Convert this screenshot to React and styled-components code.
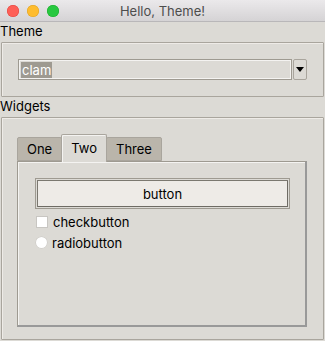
import React from "react";
import styled, { createGlobalStyle } from "styled-components";

const Global = createGlobalStyle`
  html, body { margin: 0; padding: 0; background: #dcdad5; }
  body { font-family: Inter, "Liberation Sans", Arial, sans-serif; font-size: 13px; color: #000; }
`;

const Window = styled.div`
  width: 325px;
  height: 341px;
  background: #dcdad5;
  display: flex;
  flex-direction: column;
  overflow: hidden;
`;

const TitleBar = styled.div`
  height: 21px;
  border-bottom: 1px solid #b9b7b9;
  background: linear-gradient(#ebe9eb, #d5d3d5);
  position: relative;
  display: flex;
  align-items: center;
  justify-content: center;
  color: #4d4d4d;
  font-size: 13px;
`;

const Lights = styled.div`
  position: absolute;
  left: 7px;
  top: 5px;
  display: flex;
  gap: 8px;
`;

const Light = styled.span`
  width: 12px;
  height: 12px;
  border-radius: 50%;
  background: ${(p) => p.$c};
  box-shadow: inset 0 0 0 0.5px ${(p) => p.$b};
`;

const Label = styled.div`
  height: 20px;
  line-height: 19px;
`;

const Frame = styled.div`
  margin: 0 1px;
  border: 1px solid #a9a59d;
  box-shadow: inset 1px 1px 0 #eeebe7;
  border-radius: 1px;
  ${(p) => p.$grow && "flex: 1; margin-bottom: 1px;"}
  padding: ${(p) => p.$pad};
  display: flex;
  flex-direction: column;
`;

const Combo = styled.div`
  display: flex;
  height: 21px;
`;

const Entry = styled.div`
  flex: 1;
  border: 1px solid #9e9a91;
  box-shadow: inset 1px 1px 0 #f4f3f1, inset -1px -1px 0 #f4f3f1;
  display: flex;
  align-items: center;
  padding-left: 2px;
`;

const Selected = styled.span`
  background: #9e9a91;
  color: #fff;
  padding: 0 1px;
  line-height: 16px;
`;

const Arrow = styled.div`
  width: 12px;
  margin-left: 1px;
  border: 1px solid #a9a59d;
  border-radius: 2px;
  display: flex;
  align-items: center;
  justify-content: center;
`;

const Notebook = styled.div`
  flex: 1;
  display: flex;
  flex-direction: column;
`;

const TabRow = styled.div`
  display: flex;
  align-items: flex-end;
  height: 27px;
  position: relative;
  z-index: 1;
`;

const Tab = styled.div`
  height: 24px;
  padding: 0 9px;
  box-sizing: border-box;
  display: flex;
  align-items: center;
  background: ${(p) => (p.$active ? "#dcdad5" : "#bab5ab")};
  border: 1px solid #a9a59d;
  border-bottom: ${(p) => (p.$active ? "none" : "1px solid #a9a59d")};
  border-radius: 2px 2px 0 0;
  box-shadow: ${(p) => (p.$active ? "inset 1px 1px 0 #f4f3f1" : "none")};
  margin-right: -1px;
  ${(p) => p.$active && "padding-bottom: 1px; margin-bottom: -1px; height: 28px;"}
`;

const Pane = styled.div`
  flex: 1;
  border: 1px solid #9e9a91;
  border-right-width: 2px;
  border-bottom-width: 2px;
  border-right-color: #999;
  border-bottom-color: #999;
  box-shadow: inset 1px 1px 0 #f4f3f1;
  padding: 16px 15px 0 17px;
  display: flex;
  flex-direction: column;
`;

const Button = styled.div`
  height: 31px;
  box-sizing: border-box;
  border: 1px solid #9e9a91;
  background: #eeebe7;
  box-shadow: inset 0 0 0 1px #dcdad5, inset 1px 1px 0 1px #7b7870, inset -1px -1px 0 1px #6e6b64;
  display: flex;
  align-items: center;
  justify-content: center;
`;

const Check = styled.label`
  display: flex;
  align-items: center;
  gap: 5px;
  height: 21px;
  padding-left: 1px;
  margin-top: ${(p) => p.$mt || 0};
`;

const Box = styled.span`
  width: 10px;
  height: 10px;
  background: #fff;
  border: 0.5px solid #c8c6c2;
`;

const Radio = styled.span`
  width: 11px;
  height: 11px;
  border-radius: 50%;
  background: #fff;
  box-shadow: 0 0 0 0.5px #c8c6c2;
`;

export default function App() {
  return (
    <Window>
      <Global />
      <TitleBar>
        <Lights>
          <Light $c="#fe5f57" $b="#e0443e" />
          <Light $c="#febc2e" $b="#dea123" />
          <Light $c="#28c840" $b="#1aab29" />
        </Lights>
        Hello, Theme!
      </TitleBar>
      <Label>Theme</Label>
      <Frame $pad="16px 16px 16px 16px">
        <Combo>
          <Entry>
            <Selected>clam</Selected>
          </Entry>
          <Arrow>
            <svg width="8" height="5" viewBox="0 0 8 5">
              <path d="M0 0H8L4 5Z" fill="#000" />
            </svg>
          </Arrow>
        </Combo>
      </Frame>
      <Label>Widgets</Label>
      <Frame $grow $pad="16px 16px 12px 15px">
        <Notebook>
          <TabRow>
            <Tab>One</Tab>
            <Tab $active>Two</Tab>
            <Tab>Three</Tab>
          </TabRow>
          <Pane>
            <Button>button</Button>
            <Check $mt="2px">
              <Box />
              checkbutton
            </Check>
            <Check>
              <Radio />
              radiobutton
            </Check>
          </Pane>
        </Notebook>
      </Frame>
    </Window>
  );
}
